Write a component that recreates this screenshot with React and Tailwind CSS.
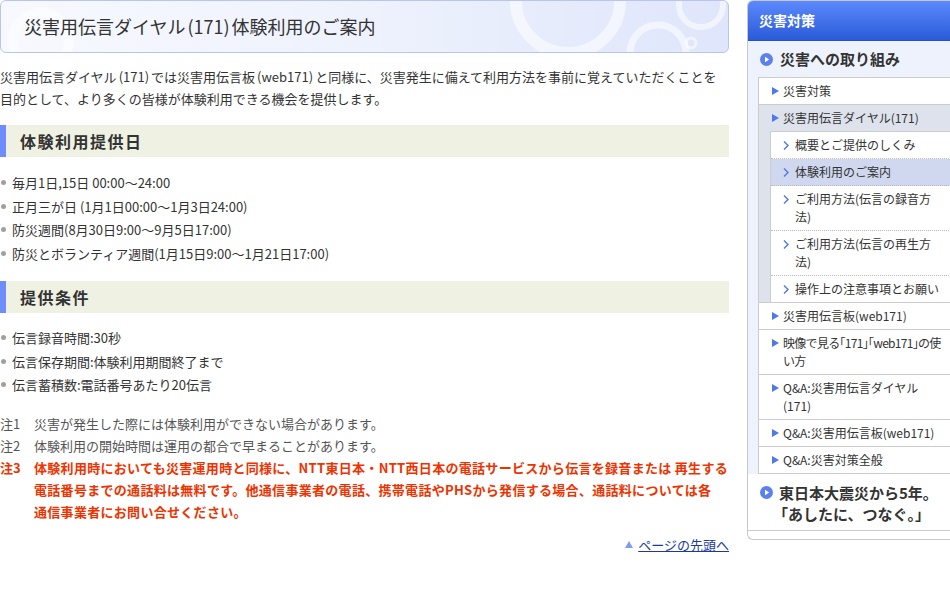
const FONT = { fontFamily: '"Noto Sans CJK JP", "Noto Sans", sans-serif' }

function Tri() {
  return (
    <span className="w-[11px] shrink-0 flex items-center h-[18px]">
      <svg width="7" height="8" viewBox="0 0 7 8">
        <path d="M0 0 L7 4 L0 8 Z" fill="#4f77ee" />
      </svg>
    </span>
  )
}

function Chev() {
  return (
    <span className="w-[12px] shrink-0 flex items-center h-[18px]">
      <svg width="6" height="9" viewBox="0 0 6 9">
        <path d="M1 0.5 L5 4.5 L1 8.5" fill="none" stroke="#4f77ee" strokeWidth="1.4" />
      </svg>
    </span>
  )
}

function Dot() {
  return (
    <svg width="13" height="13" viewBox="0 0 13 13" className="shrink-0">
      <circle cx="6.5" cy="6.5" r="6.5" fill="#5b80f0" />
      <path d="M5 3.8 L9.2 6.5 L5 9.2 Z" fill="#fff" />
    </svg>
  )
}

function Item({ children, bg = 'bg-white', tight }) {
  return (
    <div className={`flex pl-[13px] py-[4px] leading-[18px] text-[12px] text-[#333] whitespace-nowrap border-b border-[#cccccc] ${bg}`}>
      <Tri />
      <span className={tight ? 'tracking-[-0.7px]' : ''}>{children}</span>
    </div>
  )
}

function SubItem({ children, active, last }) {
  return (
    <div
      className={`flex pl-[12px] py-[4px] leading-[18px] text-[12px] text-[#333] whitespace-nowrap ${
        last ? '' : 'border-b border-dotted border-[#bbbbbb]'
      } ${active ? 'bg-[#cfd8ee]' : 'bg-white'}`}
    >
      <Chev />
      <span>{children}</span>
    </div>
  )
}

function Bullets({ items }) {
  return (
    <ul className="text-[13px] leading-[23.5px] text-[#333]">
      {items.map((t) => (
        <li key={t} className="flex items-center whitespace-nowrap">
          <span className="w-[5px] h-[5px] rounded-full bg-[#a0a0a0] ml-[1px] mr-[6px] shrink-0" />
          <span>{t}</span>
        </li>
      ))}
    </ul>
  )
}

function Heading({ children, className = '' }) {
  return (
    <div className={`h-[32px] border-l-[6px] border-[#6e8cfb] bg-[#eff1e2] pl-[14px] flex items-center text-[16px] font-bold tracking-[1.5px] text-[#333] ${className}`}>
      {children}
    </div>
  )
}

export default function App() {
  return (
    <div className="w-[950px] h-[589px] bg-white flex overflow-hidden" style={FONT}>
      {/* main column */}
      <div className="w-[729px] shrink-0">
        <div className="relative h-[53px] rounded-[6px] border border-[#b8c6ee] bg-gradient-to-r from-[#f7f9fe] via-[#eef2fd] to-[#dfe6fb] overflow-hidden flex items-center pl-[23px]">
          <svg className="absolute left-0 top-0" width="727" height="51" viewBox="0 0 727 51">
            <g fill="none" stroke="#ffffff" strokeOpacity="0.55">
              <circle cx="40" cy="40" r="28" strokeWidth="10" />
              <circle cx="567" cy="0" r="52" strokeWidth="12" />
              <circle cx="657" cy="52" r="28" strokeWidth="7" />
              <circle cx="700" cy="4" r="22" strokeWidth="6" />
              <circle cx="690" cy="42" r="5" strokeWidth="3" />
            </g>
          </svg>
          <h1 className="relative text-[18px] text-[#333] whitespace-nowrap">
            災害用伝言ダイヤル<span className="mx-[2px]">(171)</span>体験利用のご案内
          </h1>
        </div>

        <p className="mt-[13px] text-[13px] leading-[22px] text-[#333] whitespace-nowrap">
          災害用伝言ダイヤル<span className="mx-[2px]">(171)</span>では災害用伝言板<span className="mx-[2px]">(web171)</span>と同様に、災害発生に備えて利用方法を事前に覚えていただくことを
          <br />
          目的として、より多くの皆様が体験利用できる機会を提供します。
        </p>

        <Heading className="mt-[15px]">体験利用提供日</Heading>
        <div className="mt-[14px]">
          <Bullets
            items={[
              '毎月1日,15日 00:00～24:00',
              '正月三が日 (1月1日00:00～1月3日24:00)',
              '防災週間(8月30日9:00～9月5日17:00)',
              '防災とボランティア週間(1月15日9:00～1月21日17:00)'
            ]}
          />
        </div>

        <Heading className="mt-[16px]">提供条件</Heading>
        <div className="mt-[13px]">
          <Bullets
            items={[
              '伝言録音時間:30秒',
              '伝言保存期間:体験利用期間終了まで',
              '伝言蓄積数:電話番号あたり20伝言'
            ]}
          />
        </div>

        <div className="mt-[16px] text-[13px] leading-[22px]">
          <div className="flex text-[#555]">
            <span className="w-[34px] shrink-0">注1</span>
            <span>災害が発生した際には体験利用ができない場合があります。</span>
          </div>
          <div className="flex text-[#555]">
            <span className="w-[34px] shrink-0">注2</span>
            <span>体験利用の開始時間は運用の都合で早まることがあります。</span>
          </div>
          <div className="flex text-[#ee3300] font-bold whitespace-nowrap">
            <span className="w-[34px] shrink-0">注3</span>
            <span className="tracking-[0.3px]">
              体験利用時においても災害運用時と同様に、NTT東日本・NTT西日本の電話サービスから伝言を録音または 再生する
              <br />
              電話番号までの通話料は無料です。他通信事業者の電話、携帯電話やPHSから発信する場合、通話料については各
              <br />
              通信事業者にお問い合せください。
            </span>
          </div>
        </div>

        <div className="mt-[11px] flex justify-end items-center text-[13px] leading-[22px]">
          <svg width="8" height="7" viewBox="0 0 8 7" className="mr-[5px]">
            <path d="M4 0 L8 7 L0 7 Z" fill="#7f9cf5" />
          </svg>
          <a href="#" className="text-[#1a3a9c] underline">ページの先頭へ</a>
        </div>
      </div>

      {/* sidebar */}
      <div className="ml-[18px] w-[204px] h-[540px] shrink-0 border-l border-t border-b border-[#c8c8c8] rounded-tl-[6px] rounded-bl-[6px] overflow-hidden bg-white">
        <div className="h-[40px] bg-gradient-to-b from-[#5c89fd] to-[#2b5ad8] border-b border-[#2450c8] text-white text-[14px] font-bold pl-[11px] flex items-center">
          災害対策
        </div>
        <div className="bg-[#eef2fd]">
          <div className="h-[36px] flex items-center pl-[12px] gap-[7px] text-[15px] font-bold text-[#333]">
            <Dot />
            <span>災害への取り組み</span>
          </div>
          <div className="ml-[10px] border-l border-t border-[#cccccc] bg-white">
            <Item>災害対策</Item>
            <div className="bg-[#dde2ec] border-b border-[#cccccc]">
              <div className="flex pl-[13px] py-[4px] leading-[18px] text-[12px] text-[#333] whitespace-nowrap">
                <Tri />
                <span>災害用伝言ダイヤル(171)</span>
              </div>
              <div className="ml-[11px] border-l border-t border-[#cccccc] bg-white">
                <SubItem>概要とご提供のしくみ</SubItem>
                <SubItem active>体験利用のご案内</SubItem>
                <SubItem>
                  ご利用方法(伝言の録音方
                  <br />
                  法)
                </SubItem>
                <SubItem>
                  ご利用方法(伝言の再生方
                  <br />
                  法)
                </SubItem>
                <SubItem last>操作上の注意事項とお願い</SubItem>
              </div>
            </div>
            <Item>災害用伝言板(web171)</Item>
            <Item tight>
              映像で見る｢171｣｢web171｣の使
              <br />
              い方
            </Item>
            <Item>
              Q&amp;A:災害用伝言ダイヤル
              <br />
              (171)
            </Item>
            <Item>Q&amp;A:災害用伝言板(web171)</Item>
            <Item>Q&amp;A:災害対策全般</Item>
          </div>
        </div>
        <div className="flex pl-[12px] pt-[8px] pb-[6px] gap-[6px] text-[15px] font-bold leading-[21px] text-[#333] border-b border-[#cccccc] whitespace-nowrap">
          <span className="h-[21px] flex items-center">
            <Dot />
          </span>
          <span>
            東日本大震災から5年。
            <br />
            <span className="-ml-[6px]">「あしたに、つなぐ。」</span>
          </span>
        </div>
      </div>
    </div>
  )
}
